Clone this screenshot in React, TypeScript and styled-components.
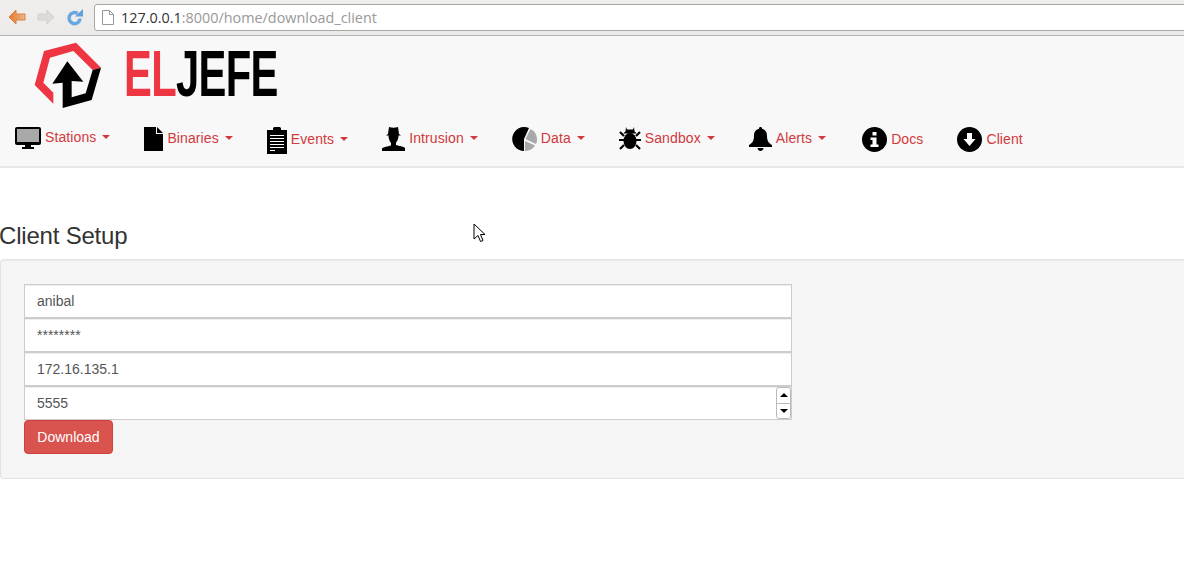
import React from 'react';
import styled, { createGlobalStyle } from 'styled-components';

const GlobalStyle = createGlobalStyle`
  html, body {
    margin: 0;
    padding: 0;
    background: #fff;
    overflow: hidden;
    font-family: "Liberation Sans", Arial, sans-serif;
    font-size: 14px;
    color: #333;
  }
  * { box-sizing: border-box; }
`;

const Page = styled.div`
  position: relative;
  width: 1184px;
  height: 564px;
  overflow: hidden;
`;

// Browser chrome
const BrowserBar = styled.div`
  height: 36px;
  display: flex;
  align-items: flex-start;
  padding: 4px 0 0 8px;
  background: linear-gradient(#f0efed, #ebeae8);
  border-bottom: 1px solid #b5b4b0;
`;

const ToolIcon = styled.svg`
  flex: none;
  margin-top: 5px;
  margin-right: 11px;
`;

const UrlBox = styled.div`
  flex: 1;
  height: 27px;
  margin-right: -4px;
  display: flex;
  align-items: center;
  padding-left: 7px;
  background: #fff;
  border: 1px solid #a9a8a4;
  border-radius: 3px;
  font-family: "Open Sans", sans-serif;
  font-size: 14.4px;
  color: #999;
`;

const UrlHost = styled.span`
  color: #333;
`;

const PageGlyph = styled.svg`
  margin-right: 7px;
`;

// Navbar
const Navbar = styled.header`
  height: 132px;
  background: #f8f8f8;
  border-bottom: 2px solid #e7e7e7;
`;

const Brand = styled.div`
  height: 91px;
  display: flex;
  align-items: flex-start;
  padding-left: 20px;
`;

const BrandName = styled.div`
  margin: 3px 0 0 4px;
  font-size: 64px;
  line-height: 70px;
  font-weight: 700;
  color: #000;
  transform: scaleX(0.652);
  transform-origin: left top;
  letter-spacing: -1px;
  white-space: nowrap;
`;

const BrandRed = styled.span`
  color: #ee3542;
`;

const NavList = styled.nav`
  display: flex;
  align-items: flex-start;
  gap: 34px;
  padding-left: 15px;
`;

const NavItem = styled.a<{ $wide?: boolean }>`
  display: flex;
  align-items: center;
  gap: 4px;
  margin-right: ${(p) => (p.$wide ? '2px' : '0')};
  color: #d2393c;
  text-decoration: none;
  white-space: nowrap;
  letter-spacing: 0.1px;
`;

const NavLabel = styled.span<{ $flat?: boolean }>`
  padding-bottom: ${(p) => (p.$flat ? '1px' : '3px')};
  line-height: 20px;
`;

const Caret = styled.i`
  display: inline-block;
  margin-left: 6px;
  vertical-align: middle;
  position: relative;
  top: -1px;
  border-top: 4px solid #d2393c;
  border-left: 4px solid transparent;
  border-right: 4px solid transparent;
`;

// Content
const Title = styled.h3`
  margin: 55px 0 10px -1px;
  font-size: 24px;
  line-height: 26px;
  font-weight: 400;
  letter-spacing: -0.2px;
  color: #333;
`;

const Well = styled.section`
  height: 220px;
  padding: 24px 23px 23px;
  background: #f5f5f5;
  border: 1px solid #e3e3e3;
  border-right: none;
  border-radius: 4px 0 0 4px;
  box-shadow: inset 0 1px 1px rgba(0, 0, 0, 0.05);
`;

const Field = styled.div`
  position: relative;
  width: 768px;
`;

const Input = styled.input`
  display: block;
  width: 100%;
  height: 34px;
  padding: 6px 12px;
  font-family: inherit;
  font-size: 14px;
  color: #555;
  background: #fff;
  border: 1px solid #ccc;
  outline: none;
  box-shadow: inset 0 1px 1px rgba(0, 0, 0, 0.075);
`;

const Spinner = styled.div`
  position: absolute;
  top: 1px;
  right: 1px;
  width: 15px;
  height: 32px;
  display: flex;
  flex-direction: column;
  background: #fff;
  border: 1px solid #bbb;
  border-radius: 3px;
`;

const SpinStep = styled.div`
  flex: 1;
  display: flex;
  align-items: center;
  justify-content: center;
  & + & { border-top: 1px solid #bbb; }
`;

const SpinArrow = styled.i<{ $up?: boolean }>`
  border-left: 4px solid transparent;
  border-right: 4px solid transparent;
  ${(p) => (p.$up ? 'border-bottom: 4px solid #000;' : 'border-top: 4px solid #000;')}
`;

const DownloadButton = styled.button`
  display: block;
  width: 89px;
  height: 34px;
  padding: 6px 0;
  font-family: inherit;
  font-size: 14px;
  color: #fff;
  background: #d9534f;
  border: 1px solid #d43f3a;
  border-radius: 4px;
`;

const Cursor = styled.svg`
  position: absolute;
  left: 473px;
  top: 223px;
`;

// Drawn icons
const Monitor = () => (
  <svg width="26" height="23" viewBox="0 0 26 23">
    <rect x="0" y="0" width="26" height="18" rx="2" fill="#000" />
    <rect x="2" y="2" width="22" height="13" fill="#a9a9a9" />
    <path d="M10 18h6v2h3v2H7v-2h3z" fill="#000" />
  </svg>
);

const FileIcon = () => (
  <svg width="19" height="24" viewBox="0 0 19 24">
    <path d="M0 0h12v7h7v17H0z" fill="#000" />
    <path d="M13 0l6 6h-6z" fill="#000" />
  </svg>
);

const Clipboard = () => (
  <svg width="20" height="27" viewBox="0 0 20 27">
    <path d="M0 3h6V1.500C6 .5 7 0 8 0h4c1 0 2 .5 2 1.500V3h6v24H0z" fill="#000" />
    <path d="M3 8.500h14M3 11.500h14M3 14.500h14M3 17.500h14M3 20.500h14M3 23.500h5" stroke="#fff" strokeWidth="1" />
  </svg>
);

const Spy = () => (
  <svg width="23" height="24" viewBox="0 0 23 24">
    <path d="M7 0c1.500.6 3 .8 4.500.8S14.500.6 16 0l1 7 2 1.500h-2.500c0 3-1 5.500-2.500 7v2.500c3 1 8 1.500 9 3V24H0v-2.500c1-1.500 6-2 9-3v-2.500C7.500 14 6.500 11.500 6.500 8.500H4L6 7z" fill="#000" />
  </svg>
);

const Pie = () => (
  <svg width="25" height="24" viewBox="0 0 25 24">
    <path d="M12 12l5-11A12 12 0 1 0 12 24z" fill="#000" />
    <path d="M13.500 12l5-10A11.500 11.500 0 0 1 24 17z" fill="#a8a8a8" />
    <path d="M13 14l10 4.500A11.500 11.500 0 0 1 13 24z" fill="#a8a8a8" />
  </svg>
);

const Bug = () => (
  <svg width="22" height="24" viewBox="0 0 22 24">
    <path d="M7 0l1 2.500h6L15 0l.5 4.500c1 .5 1.500 1 2 2h-13c.5-1 1-1.500 2-2z" fill="#000" />
    <ellipse cx="11" cy="14" rx="6.500" ry="8" fill="#000" />
    <path d="M1 5l4 4M21 5l-4 4M0 13h5M22 13h-5M1 22l4-4M21 22l-4-4" stroke="#000" strokeWidth="2.200" />
  </svg>
);

const Bell = () => (
  <svg width="23" height="25" viewBox="0 0 23 25">
    <path d="M11.500 0c1 0 1.500.7 1.500 1.700 3.500.8 5 3.500 5 7 0 5 1.500 7 5 9.300v2H0v-2c3.500-2.300 5-4.300 5-9.300 0-3.500 1.500-6.200 5-7C10 .7 10.500 0 11.500 0z" fill="#000" />
    <path d="M8.500 21h6c0 1.500-1.300 3-3 3s-3-1.500-3-3z" fill="#000" />
  </svg>
);

const InfoIcon = () => (
  <svg width="25" height="25" viewBox="0 0 25 25">
    <circle cx="12.500" cy="12.500" r="12.500" fill="#000" />
    <rect x="10.500" y="5" width="4" height="3.500" fill="#fff" />
    <path d="M8.500 10.500h6v7h2v2.500h-8v-2.500h2V13h-2z" fill="#fff" />
  </svg>
);

const DownIcon = () => (
  <svg width="25" height="25" viewBox="0 0 25 25">
    <circle cx="12.500" cy="12.500" r="12.500" fill="#000" />
    <path d="M10 6h5v6h3.500l-6 7-6-7H10z" fill="#fff" />
  </svg>
);

const navItems = [
  { label: 'Stations', icon: <Monitor />, menu: true },
  { label: 'Binaries', icon: <FileIcon />, menu: true },
  { label: 'Events', icon: <Clipboard />, menu: true },
  { label: 'Intrusion', icon: <Spy />, menu: true },
  { label: 'Data', icon: <Pie />, menu: true },
  { label: 'Sandbox', icon: <Bug />, menu: true },
  { label: 'Alerts', icon: <Bell />, menu: true, wide: true },
  { label: 'Docs', icon: <InfoIcon />, menu: false },
  { label: 'Client', icon: <DownIcon />, menu: false },
];

const App: React.FC = () => (
  <Page>
    <GlobalStyle />
    <BrowserBar>
      <ToolIcon width="18" height="16" viewBox="0 0 18 16">
        <defs>
          <linearGradient id="backFill" x1="0" y1="0" x2="1" y2="0">
            <stop offset="0" stopColor="#e6772c" />
            <stop offset="1" stopColor="#ecb88c" />
          </linearGradient>
        </defs>
        <path d="M8 1L1 8l7 7V11h9V5H8z" fill="url(#backFill)" stroke="#d9803f" strokeLinejoin="round" />
      </ToolIcon>
      <ToolIcon width="18" height="16" viewBox="0 0 18 16">
        <path d="M10 1l7 7-7 7V11H1V5h9z" fill="#dcdbd8" stroke="#d2d1cc" strokeLinejoin="round" />
      </ToolIcon>
      <ToolIcon width="17" height="17" viewBox="0 0 17 17">
        <path d="M14 9.500a5.500 5.500 0 1 1-2.500-5" fill="none" stroke="#6aa6e0" strokeWidth="3.500" />
        <path d="M9 7.500h8V0z" fill="#5f9fdc" />
      </ToolIcon>
      <UrlBox>
        <PageGlyph width="12" height="15" viewBox="0 0 12 15">
          <path d="M.5.500h7l4 4v10H.5z" fill="#fff" stroke="#999" />
          <path d="M7.500.500v4h4" fill="none" stroke="#999" />
        </PageGlyph>
        <UrlHost>127.0.0.1</UrlHost>:8000/home/download_client
      </UrlBox>
    </BrowserBar>

    <Navbar>
      <Brand>
        <svg width="100" height="80" viewBox="0 0 300 240">
          <path d="M72 45L168 20l75 75-25 7-58-57-70 20-20 75 30 30v33L44 147z" fill="#ee3542" />
          <path d="M128 216l87-24 28-97-25 7-21 70-42 12v-49l35 2-48-61-45 67 31-3z" fill="#000" />
        </svg>
        <BrandName>
          <BrandRed>EL</BrandRed>JEFE
        </BrandName>
      </Brand>
      <NavList>
        {navItems.map((item) => (
          <NavItem key={item.label} $wide={item.wide}>
            {item.icon}
            <NavLabel $flat={!item.menu}>
              {item.label}
              {item.menu && <Caret />}
            </NavLabel>
          </NavItem>
        ))}
      </NavList>
    </Navbar>

    <Title>Client Setup</Title>
    <Well>
      <Field>
        <Input defaultValue="anibal" readOnly />
      </Field>
      <Field>
        <Input defaultValue="********" readOnly />
      </Field>
      <Field>
        <Input defaultValue="172.16.135.1" readOnly />
      </Field>
      <Field>
        <Input defaultValue="5555" readOnly />
        <Spinner>
          <SpinStep>
            <SpinArrow $up />
          </SpinStep>
          <SpinStep>
            <SpinArrow />
          </SpinStep>
        </Spinner>
      </Field>
      <DownloadButton>Download</DownloadButton>
    </Well>

    <Cursor width="14" height="20" viewBox="0 0 14 20">
      <path d="M1 1v15l4-3.500 2.500 6 2.500-1-2.500-6H12z" fill="#fff" stroke="#000" />
    </Cursor>
  </Page>
);

export default App;
